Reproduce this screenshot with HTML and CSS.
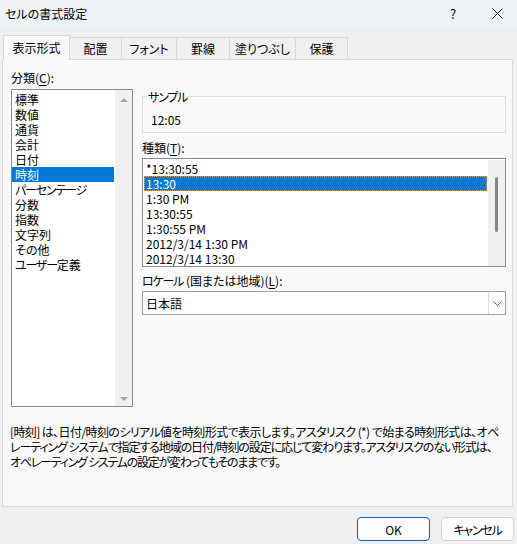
FILE: index.html
```html
<!DOCTYPE html>
<html lang="ja">
<head>
<meta charset="utf-8">
<title>セルの書式設定</title>
<link rel="stylesheet" href="styles.css">
</head>
<body>
<div class="window">
  <div class="titlebar">
    <span class="title">セルの書式設定</span>
    <span class="help">?</span>
    <svg class="close" width="11" height="11" viewBox="0 0 11 11"><path d="M0.5 0.5 L10.5 10.5 M10.5 0.5 L0.5 10.5" stroke="#1a1a1a" stroke-width="1" fill="none"/></svg>
  </div>
  <div class="tabs">
    <div class="tab active w67">表示形式</div>
    <div class="tab w53">配置</div>
    <div class="tab w56">フォント</div>
    <div class="tab w54">罫線</div>
    <div class="tab w67">塗りつぶし</div>
    <div class="tab w53">保護</div>
  </div>
  <div class="panel">
    <div class="cols">
      <div class="left">
        <div class="label">分類(<u>C</u>):</div>
        <div class="listbox cat">
          <div class="items">
            <div class="item">標準</div>
            <div class="item">数値</div>
            <div class="item">通貨</div>
            <div class="item">会計</div>
            <div class="item">日付</div>
            <div class="item sel">時刻</div>
            <div class="item nk">パーセンテージ</div>
            <div class="item">分数</div>
            <div class="item">指数</div>
            <div class="item">文字列</div>
            <div class="item">その他</div>
            <div class="item"><span class="nk">ユーザー</span>定義</div>
          </div>
          <div class="vscroll">
            <span class="arrow up"></span>
            <span class="arrow down"></span>
          </div>
        </div>
      </div>
      <div class="right">
        <fieldset class="sample">
          <legend class="nk">サンプル</legend>
          <div class="sample-val">12:05</div>
        </fieldset>
        <div class="label type-label">種類(<u>T</u>):</div>
        <div class="listbox types">
          <div class="items">
            <div class="item">*13:30:55</div>
            <div class="item sel focus">13:30</div>
            <div class="item">1:30 PM</div>
            <div class="item">13:30:55</div>
            <div class="item">1:30:55 PM</div>
            <div class="item">2012/3/14 1:30 PM</div>
            <div class="item">2012/3/14 13:30</div>
          </div>
          <div class="vscroll thumbbar">
            <span class="thumb"></span>
          </div>
        </div>
        <div class="label locale-label"><span class="nk">ロケール</span> (国または地域)(<u>L</u>):</div>
        <div class="combo">
          <span class="combo-text">日本語</span>
          <span class="drop"><svg width="9" height="5" viewBox="0 0 9 5"><polyline points="0.5,0.5 4.5,4.5 8.5,0.5" fill="none" stroke="#5a5a5a" stroke-width="1"/></svg></span>
        </div>
      </div>
    </div>
    <div class="desc">
      <div class="line l1">[時刻] は、日付/時刻のシリアル値を時刻形式で表示します。アスタリスク (*) で始まる時刻形式は、オペ</div>
      <div class="line l2">レーティング システムで指定する地域の日付/時刻の設定に応じて変わります。アスタリスクのない形式は、</div>
      <div class="line l3">オペレーティング システムの設定が変わってもそのままです。</div>
    </div>
  </div>
  <div class="buttons">
    <button class="btn ok">OK</button>
    <button class="btn"><span class="nk">キャンセル</span></button>
  </div>
</div>
</body>
</html>
```
FILE: styles.css
```css
html, body {
  margin: 0;
  padding: 0;
}
body {
  background: #f0f0f0;
  font-family: "Noto Sans CJK JP", "Noto Sans", sans-serif;
  font-size: 12px;
  line-height: 15px;
  color: #000;
  font-feature-settings: "palt";
}
.window {
  width: 517px;
  height: 544px;
  overflow: hidden;
}
.nk {
  letter-spacing: -1.2px;
}
.titlebar {
  height: 27px;
  background: #eef3f8;
  display: flex;
  align-items: center;
  padding-left: 5px;
  box-sizing: border-box;
}
.title {
  flex: 1;
}
.help {
  width: 10px;
  text-align: center;
  font-size: 13px;
}
.close {
  margin-left: 34px;
  margin-right: 14px;
}
.tabs {
  margin-top: 8px;
  height: 24px;
  display: flex;
  align-items: flex-end;
  padding-left: 3px;
}
.tab {
  box-sizing: border-box;
  height: 22px;
  border: 1px solid #d9d9d9;
  border-bottom: none;
  margin-left: -1px;
  display: flex;
  align-items: center;
  justify-content: center;
  background: #f0f0f0;
}
.tab.active {
  margin-left: 0;
  height: 25px;
  margin-bottom: -1px;
  background: #f9f9f9;
  position: relative;
  z-index: 1;
  padding-bottom: 1px;
}
.w67 { width: 67px; }
.w53 { width: 53px; }
.w56 { width: 56px; }
.w54 { width: 54px; }
.panel {
  margin-left: 2px;
  width: 511px;
  height: 448px;
  box-sizing: border-box;
  border: 1px solid #d9d9d9;
  background: #f9f9f9;
  padding: 10px 0 0 8px;
}
.cols {
  display: grid;
  grid-template-columns: 122px 364px;
  column-gap: 9px;
  align-items: start;
}
.label u {
  text-decoration: underline;
  text-underline-offset: 2px;
}
.left .label {
  margin-bottom: 4px;
}
.listbox {
  box-sizing: border-box;
  border: 1px solid #8a8a8a;
  background: #fff;
  display: flex;
  overflow: hidden;
}
.listbox.cat {
  height: 318px;
}
.listbox.types {
  height: 109px;
  margin-top: 3px;
}
.items {
  flex: 1;
  padding: 2px 1px 0 0;
  min-width: 0;
}
.item {
  height: 15px;
  padding-left: 3px;
  white-space: nowrap;
}
.types .item {
  padding-left: 2px;
  margin-left: 1px;
}
.item.sel {
  background: #0078d7;
  color: #fff;
}
.item.focus {
  outline: 1px dotted #f2a23a;
  outline-offset: -1px;
}
.vscroll {
  width: 17px;
  background: #f0f0f0;
  display: flex;
  flex-direction: column;
  align-items: center;
  justify-content: space-between;
  padding: 8px 0 5px;
  box-sizing: border-box;
}
.arrow {
  width: 0;
  height: 0;
  border-left: 4px solid transparent;
  border-right: 4px solid transparent;
}
.arrow.up {
  border-bottom: 4px solid #a6a6a6;
}
.arrow.down {
  border-top: 4px solid #a6a6a6;
}
.thumbbar {
  justify-content: flex-start;
  padding: 17px 0 0;
  margin-top: 1px;
}
.thumb {
  width: 3px;
  height: 55px;
  background: #858585;
  border-radius: 2px;
}
.sample {
  margin: 19px 0 0;
  padding: 0 0 5px 4px;
  border: 1px solid #dcdcdc;
  min-width: 0;
}
.sample legend {
  padding: 0 1px;
  line-height: 15px;
}
.sample-val {
  margin-top: 8px;
  padding-left: 4px;
}
.type-label {
  margin-top: 7px;
}
.locale-label {
  margin-top: 6px;
}
.combo {
  margin-top: 3px;
  height: 24px;
  box-sizing: border-box;
  border: 1px solid #a0a0a0;
  background: #fff;
  display: flex;
  align-items: stretch;
}
.combo-text {
  flex: 1;
  display: flex;
  align-items: center;
  padding-left: 3px;
}
.drop {
  width: 16px;
  border-left: 1px solid #dedede;
  display: flex;
  align-items: center;
  justify-content: center;
  background: #fff;
}
.desc {
  margin: 17px 0 0 -1px;
}
.line {
  white-space: nowrap;
  height: 15px;
  line-height: 15px;
}
.l1 {
  letter-spacing: -0.6px;
}
.l2 {
  letter-spacing: -1.1px;
}
.l3 {
  letter-spacing: -1.25px;
}
.buttons {
  margin-top: 10px;
  display: flex;
  justify-content: flex-end;
  gap: 11px;
  padding-right: 3px;
}
.btn {
  width: 73px;
  height: 24px;
  box-sizing: border-box;
  border: 1px solid #d0d0d0;
  border-radius: 4px;
  background: #fdfdfd;
  font-family: inherit;
  font-size: 12px;
  line-height: 15px;
  color: #000;
  padding: 0;
  font-feature-settings: "palt";
}
.btn.ok {
  border-color: #005fb8;
}
```
